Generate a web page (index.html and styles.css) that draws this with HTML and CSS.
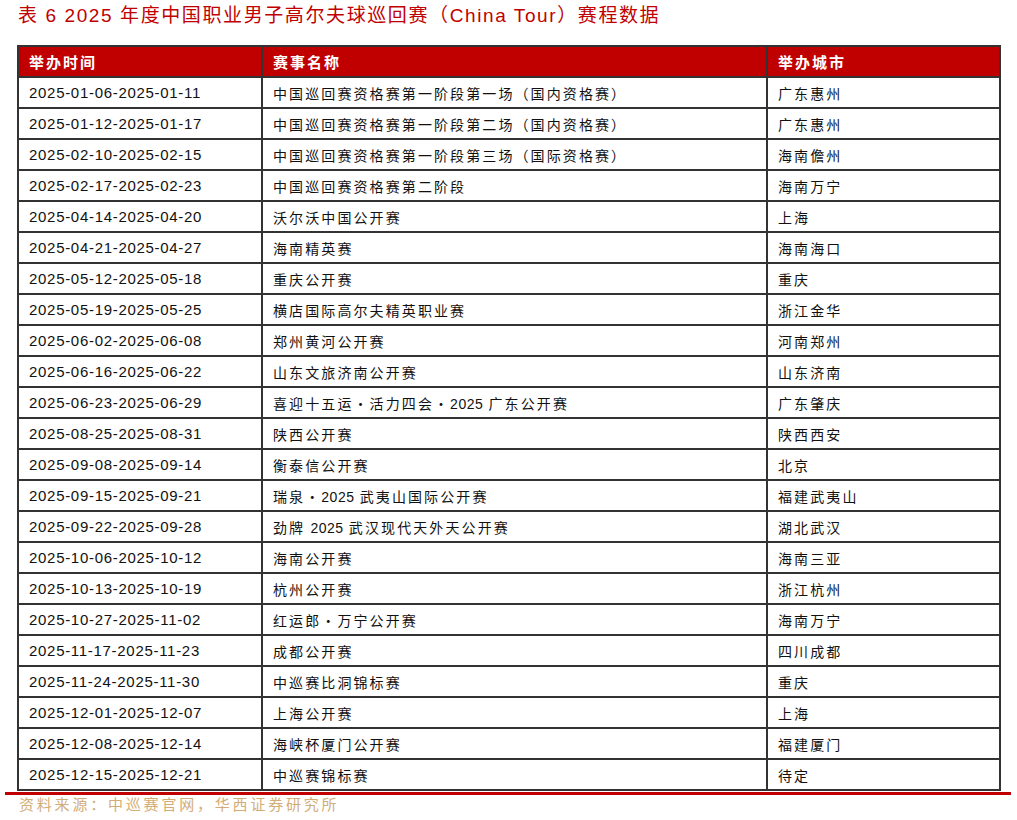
FILE: index.html
```html
<!DOCTYPE html>
<html lang="zh">
<head>
<meta charset="utf-8">
<link rel="stylesheet" href="styles.css">
</head>
<body>
<div class="page">
  <h1 class="title">表 6 2025 年度中国职业男子高尔夫球巡回赛（China Tour）赛程数据</h1>
  <table class="sched">
    <thead>
      <tr><th class="c1">举办时间</th><th class="c2">赛事名称</th><th class="c3">举办城市</th></tr>
    </thead>
    <tbody>
      <tr><td class="d">2025-01-06-2025-01-11</td><td>中国巡回赛资格赛第一阶段第一场（国内资格赛）</td><td>广东惠州</td></tr>
      <tr><td class="d">2025-01-12-2025-01-17</td><td>中国巡回赛资格赛第一阶段第二场（国内资格赛）</td><td>广东惠州</td></tr>
      <tr><td class="d">2025-02-10-2025-02-15</td><td>中国巡回赛资格赛第一阶段第三场（国际资格赛）</td><td>海南儋州</td></tr>
      <tr><td class="d">2025-02-17-2025-02-23</td><td>中国巡回赛资格赛第二阶段</td><td>海南万宁</td></tr>
      <tr><td class="d">2025-04-14-2025-04-20</td><td>沃尔沃中国公开赛</td><td>上海</td></tr>
      <tr><td class="d">2025-04-21-2025-04-27</td><td>海南精英赛</td><td>海南海口</td></tr>
      <tr><td class="d">2025-05-12-2025-05-18</td><td>重庆公开赛</td><td>重庆</td></tr>
      <tr><td class="d">2025-05-19-2025-05-25</td><td>横店国际高尔夫精英职业赛</td><td>浙江金华</td></tr>
      <tr><td class="d">2025-06-02-2025-06-08</td><td>郑州黄河公开赛</td><td>河南郑州</td></tr>
      <tr><td class="d">2025-06-16-2025-06-22</td><td>山东文旅济南公开赛</td><td>山东济南</td></tr>
      <tr><td class="d">2025-06-23-2025-06-29</td><td>喜迎十五运•活力四会•<span class="n">2025</span> 广东公开赛</td><td>广东肇庆</td></tr>
      <tr><td class="d">2025-08-25-2025-08-31</td><td>陕西公开赛</td><td>陕西西安</td></tr>
      <tr><td class="d">2025-09-08-2025-09-14</td><td>衡泰信公开赛</td><td>北京</td></tr>
      <tr><td class="d">2025-09-15-2025-09-21</td><td>瑞泉•<span class="n">2025</span> 武夷山国际公开赛</td><td>福建武夷山</td></tr>
      <tr><td class="d">2025-09-22-2025-09-28</td><td>劲牌 <span class="n">2025</span> 武汉现代天外天公开赛</td><td>湖北武汉</td></tr>
      <tr><td class="d">2025-10-06-2025-10-12</td><td>海南公开赛</td><td>海南三亚</td></tr>
      <tr><td class="d">2025-10-13-2025-10-19</td><td>杭州公开赛</td><td>浙江杭州</td></tr>
      <tr><td class="d">2025-10-27-2025-11-02</td><td>红运郎•万宁公开赛</td><td>海南万宁</td></tr>
      <tr><td class="d">2025-11-17-2025-11-23</td><td>成都公开赛</td><td>四川成都</td></tr>
      <tr><td class="d">2025-11-24-2025-11-30</td><td>中巡赛比洞锦标赛</td><td>重庆</td></tr>
      <tr><td class="d">2025-12-01-2025-12-07</td><td>上海公开赛</td><td>上海</td></tr>
      <tr><td class="d">2025-12-08-2025-12-14</td><td>海峡杯厦门公开赛</td><td>福建厦门</td></tr>
      <tr><td class="d">2025-12-15-2025-12-21</td><td>中巡赛锦标赛</td><td>待定</td></tr>
    </tbody>
  </table>
  <div class="rule"></div>
  <p class="source">资料来源：中巡赛官网，华西证券研究所</p>
</div>
</body>
</html>
```

FILE: styles.css
```css
html, body {
  margin: 0;
  padding: 0;
  background: #ffffff;
}

.page {
  width: 1017px;
  height: 820px;
  font-family: "Noto Sans CJK SC", "Liberation Sans", sans-serif;
}

.title {
  margin: 0;
  padding: 4px 0 0 18px;
  height: 40px;
  box-sizing: border-box;
  font-family: "Liberation Sans", "Noto Sans CJK SC", sans-serif;
  font-weight: normal;
  font-size: 19px;
  line-height: 24px;
  letter-spacing: 1.6px;
  color: #c00000;
}

.sched {
  margin: 5px 0 0 17px;
  width: 984px;
  border-collapse: collapse;
  table-layout: fixed;
  border: 2px solid #333333;
}

.sched th,
.sched td {
  border: 2px solid #333333;
  height: 29px;
  padding: 0 0 0 10px;
  text-align: left;
  vertical-align: middle;
  font-size: 14px;
  letter-spacing: 2.1px;
  color: #111111;
  white-space: nowrap;
}

.sched th {
  background: #c00000;
  color: #ffffff;
  font-weight: bold;
  font-size: 15px;
  letter-spacing: 2px;
}

.c1 { width: 232px; }
.c2 { width: 493px; }
.c3 { width: auto; }

.sched td.d {
  font-family: "Liberation Sans", sans-serif;
  font-size: 15px;
  letter-spacing: 0.7px;
}

.n {
  font-family: "Liberation Sans", sans-serif;
  letter-spacing: 0.5px;
}

.rule {
  margin: 1px 0 0 5px;
  width: 1006px;
  height: 3px;
  background: #c00000;
}

.source {
  margin: 0 0 0 19px;
  font-size: 15px;
  line-height: 18px;
  letter-spacing: 2.8px;
  color: #d2ad78;
}
```
